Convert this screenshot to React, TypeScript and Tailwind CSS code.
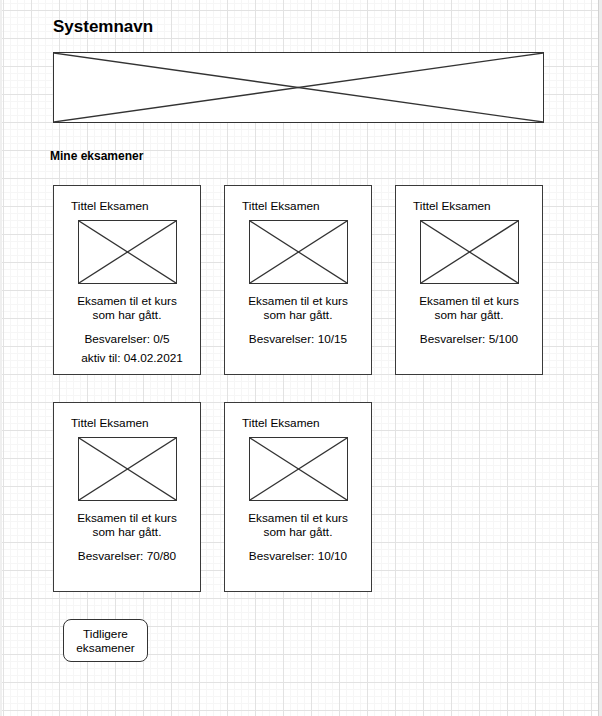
import React from 'react';

interface Exam {
  title: string;
  description: string[];
  answers: string;
  activeUntil?: string;
}

const exams: Exam[] = [
  { title: 'Tittel Eksamen', description: ['Eksamen til et kurs', 'som har gått.'], answers: 'Besvarelser: 0/5', activeUntil: 'aktiv til: 04.02.2021' },
  { title: 'Tittel Eksamen', description: ['Eksamen til et kurs', 'som har gått.'], answers: 'Besvarelser: 10/15' },
  { title: 'Tittel Eksamen', description: ['Eksamen til et kurs', 'som har gått.'], answers: 'Besvarelser: 5/100' },
  { title: 'Tittel Eksamen', description: ['Eksamen til et kurs', 'som har gått.'], answers: 'Besvarelser: 70/80' },
  { title: 'Tittel Eksamen', description: ['Eksamen til et kurs', 'som har gått.'], answers: 'Besvarelser: 10/10' },
];

// wireframe image placeholder: box with a cross
const Placeholder: React.FC<{ className?: string }> = ({ className }) => (
  <div className={`relative bg-white border-[1.5px] border-[#333] ${className ?? ''}`}>
    <svg className="absolute inset-0 h-full w-full" viewBox="0 0 100 100" preserveAspectRatio="none">
      <line x1="0" y1="0" x2="100" y2="100" stroke="#333" strokeWidth="1.3" vectorEffect="non-scaling-stroke" />
      <line x1="100" y1="0" x2="0" y2="100" stroke="#333" strokeWidth="1.3" vectorEffect="non-scaling-stroke" />
    </svg>
  </div>
);

const ExamCard: React.FC<{ exam: Exam }> = ({ exam }) => (
  <div className="h-[190px] w-[148px] border border-[#3a3a3a] bg-white flex flex-col items-center pt-[13px] text-[11.8px]">
    <p className="self-start pl-[17px] leading-[14px]">{exam.title}</p>
    <Placeholder className="mt-[7px] h-[64px] w-[99px]" />
    <p className="mt-[11px] text-center leading-[13.5px]">
      {exam.description[0]}
      <br />
      {exam.description[1]}
    </p>
    <p className="mt-[10px] leading-[14px]">{exam.answers}</p>
    {exam.activeUntil && <p className="mt-[5px] pl-[10px] leading-[14px]">{exam.activeUntil}</p>}
  </div>
);

export default function App() {
  return (
    <div className="flex h-[716px] w-[602px] overflow-hidden bg-white text-black font-['Liberation_Sans',Arial,sans-serif]">
      <div className="w-[2px] bg-[#efefef]" />
      <div className="flex-1 pl-[48px] bg-[linear-gradient(to_right,#e2e2e2_1px,transparent_1px),linear-gradient(to_bottom,#e2e2e2_1px,transparent_1px),linear-gradient(to_right,#f6f6f6_1px,transparent_1px),linear-gradient(to_bottom,#f6f6f6_1px,transparent_1px)] bg-[size:28px_28px,28px_28px,7px_7px,7px_7px] bg-[position:1px_10px]">
        <h1 className="ml-[3px] mt-[17px] text-[17px] font-bold leading-[20px]">Systemnavn</h1>
        <Placeholder className="ml-[3px] mt-[15px] h-[71px] w-[491px]" />
        <h2 className="mt-[25px] text-[12px] font-bold leading-[16px]">Mine eksamener</h2>
        <div className="ml-[3px] mt-[21px] grid grid-cols-[148px_148px_148px] gap-x-[23px] gap-y-[27px]">
          {exams.map((exam, i) => (
            <ExamCard key={i} exam={exam} />
          ))}
        </div>
        <button className="ml-[13px] mt-[27px] flex h-[43px] w-[85px] flex-col items-center justify-center rounded-[8px] border border-[#333] bg-white text-[11.8px] leading-[14px]">
          <span>Tidligere</span>
          <span>eksamener</span>
        </button>
      </div>
      <div className="w-[4px] border-l border-[#d2d2d2] bg-[#ececec]" />
    </div>
  );
}
